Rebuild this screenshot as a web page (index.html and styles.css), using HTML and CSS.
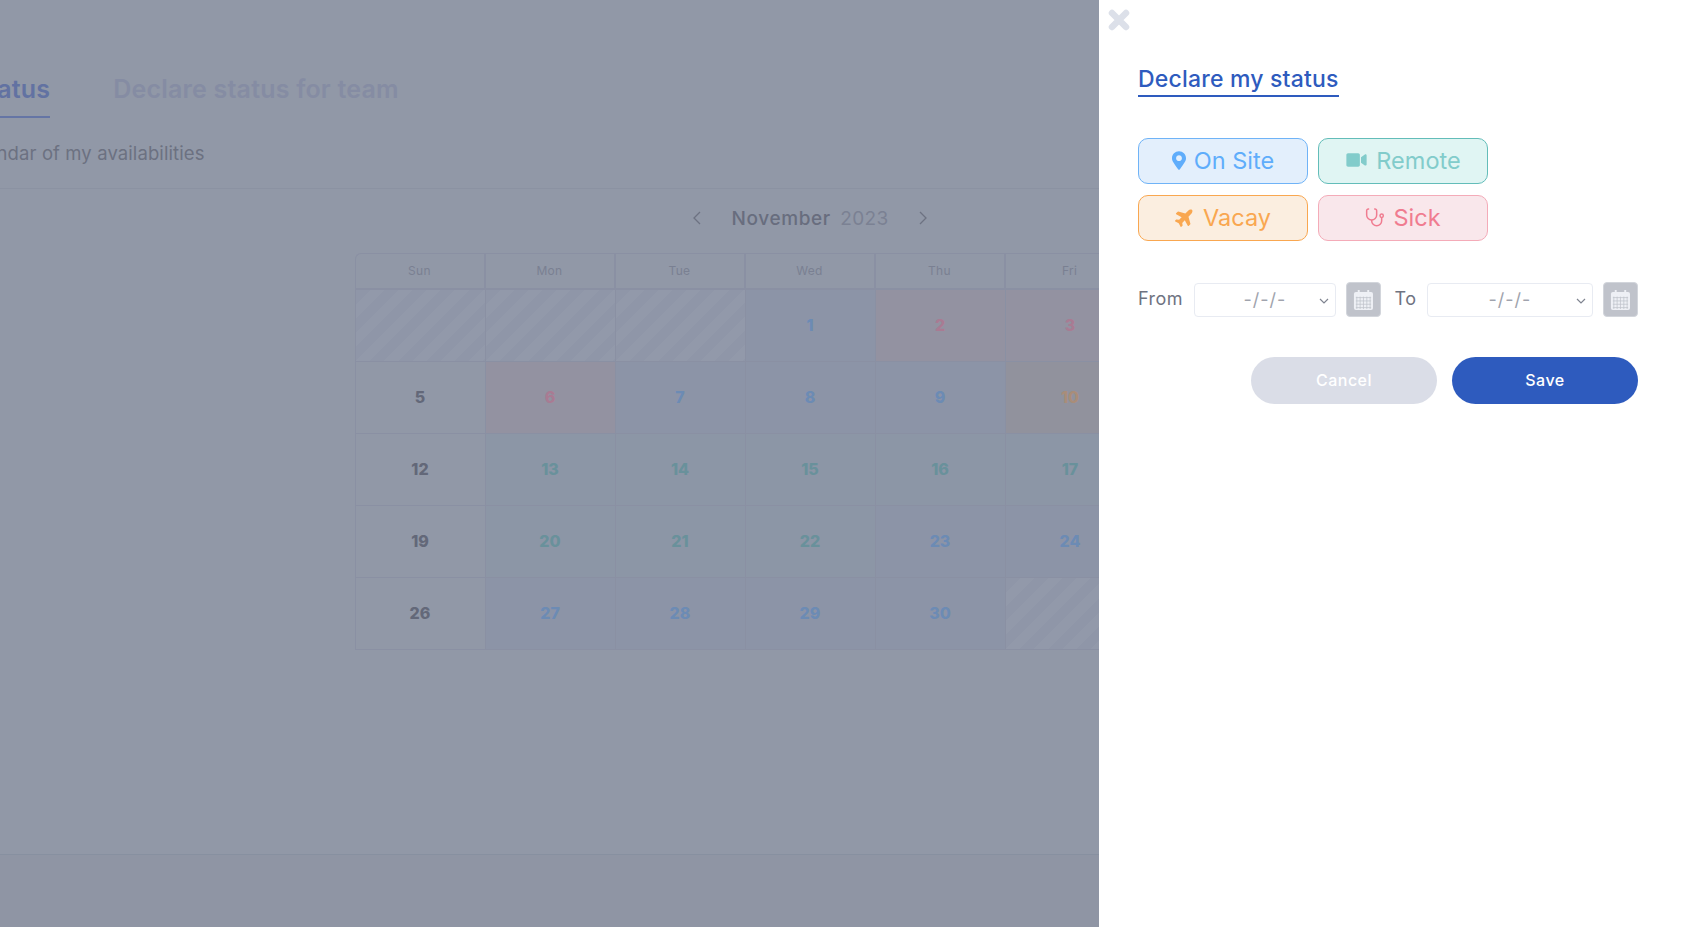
FILE: index.html
```html
<!DOCTYPE html>
<html lang="en">
<head>
    <meta charset="utf-8">
    <title>Declare my status</title>
    <link rel="stylesheet" href="styles.css">
</head>

<body>
    <div class="page">
        <div class="tabs">
            <a class="tab tab_active">Declare my status</a>
            <a class="tab">Declare status for team</a>
        </div>
        <p class="subtitle">Calendar of my availabilities</p>

        <div class="month">
            <svg class="chevron" viewBox="0 0 10 16"><path d="M8 2 2 8l6 6"/></svg>
            <div class="month_name"><b>November</b> <span>2023</span></div>
            <svg class="chevron" viewBox="0 0 10 16"><path d="m2 2 6 6-6 6"/></svg>
        </div>

        <div class="calendar">
            <div class="head">Sun</div>
            <div class="head">Mon</div>
            <div class="head">Tue</div>
            <div class="head">Wed</div>
            <div class="head">Thu</div>
            <div class="head">Fri</div>
            <div class="head">Sat</div>

            <div class="day off"></div>
            <div class="day off"></div>
            <div class="day off"></div>
            <div class="day site">1</div>
            <div class="day sick">2</div>
            <div class="day sick">3</div>
            <div class="day">4</div>

            <div class="day">5</div>
            <div class="day sick">6</div>
            <div class="day site">7</div>
            <div class="day site">8</div>
            <div class="day site">9</div>
            <div class="day vacay">10</div>
            <div class="day">11</div>

            <div class="day">12</div>
            <div class="day remote">13</div>
            <div class="day remote">14</div>
            <div class="day remote">15</div>
            <div class="day remote">16</div>
            <div class="day remote">17</div>
            <div class="day">18</div>

            <div class="day">19</div>
            <div class="day remote">20</div>
            <div class="day remote">21</div>
            <div class="day remote">22</div>
            <div class="day site">23</div>
            <div class="day site">24</div>
            <div class="day">25</div>

            <div class="day">26</div>
            <div class="day site">27</div>
            <div class="day site">28</div>
            <div class="day site">29</div>
            <div class="day site">30</div>
            <div class="day off"></div>
            <div class="day off"></div>
        </div>

        <div class="footer"></div>
    </div>

    <div class="drawer">
        <svg class="close" viewBox="0 0 22 22"><path d="M4 4l14 14M18 4 4 18"/></svg>

        <h2 class="title">Declare my status</h2>

        <div class="statuses">
            <button class="status status_site">
                <svg class="icon_site" viewBox="0 0 384 512"><path d="M172.268 501.67C26.97 291.031 0 268.413 0 192 0 85.961 85.961 0 192 0s192 85.961 192 192c0 76.413-26.97 99.031-172.268 309.67-9.535 13.774-29.93 13.773-39.464 0zM192 272c44.183 0 80-35.817 80-80s-35.817-80-80-80-80 35.817-80 80 35.817 80 80 80z"/></svg>
                On Site
            </button>
            <button class="status status_remote">
                <svg class="icon_remote" viewBox="0 0 576 512"><path d="M336.2 64H47.8C21.4 64 0 85.4 0 111.8v288.4C0 426.6 21.4 448 47.8 448h288.4c26.4 0 47.8-21.4 47.8-47.8V111.8c0-26.4-21.4-47.8-47.8-47.8zm189.4 37.7L416 177.3v157.4l109.6 75.5c21.2 14.6 50.4-.3 50.4-25.8V127.5c0-25.4-29.1-40.4-50.4-25.8z"/></svg>
                Remote
            </button>
            <button class="status status_vacay">
                <svg class="icon_vacay" viewBox="0 0 576 512"><path transform="rotate(-45 288 256)" d="M480 192H365.71L260.61 8.06A16.014 16.014 0 0 0 246.71 0h-65.5c-10.63 0-18.3 10.17-15.38 20.39L214.86 192H112l-43.2-57.6c-3.02-4.03-7.77-6.4-12.8-6.4H16.01C5.6 128-2.04 137.78.49 147.88L32 256 .49 364.12C-2.04 374.22 5.6 384 16.01 384H56c5.04 0 9.78-2.37 12.8-6.4L112 320h102.86l-49.03 171.6c-2.92 10.22 4.75 20.4 15.38 20.4h65.5c5.74 0 11.04-3.08 13.89-8.06L365.71 320H480c35.35 0 96-28.65 96-64s-60.65-64-96-64z"/></svg>
                Vacay
            </button>
            <button class="status status_sick">
                <svg class="icon_sick" viewBox="0 0 24 24"><path d="M5 2.500H4a2 2 0 0 0-2 2v5a6 6 0 0 0 12 0v-5a2 2 0 0 0-2-2h-1"/><path d="M8 15.500v1a6 6 0 0 0 12 0v-4"/><circle cx="20" cy="10.500" r="2"/></svg>
                Sick
            </button>
        </div>

        <div class="dates">
            <span class="date_label">From</span>
            <div class="select select_from">
                <span>-/-/-</span>
                <svg viewBox="0 0 10 6"><path d="m1 1 4 4 4-4"/></svg>
            </div>
            <button class="cal_btn">
                <svg viewBox="0 0 22 22"><path class="cal_body" d="M3 3h16a2 2 0 0 1 2 2v15a2 2 0 0 1-2 2H3a2 2 0 0 1-2-2V5a2 2 0 0 1 2-2z"/><path class="cal_ring" d="M6 1v4M16 1v4"/><path class="cal_grid" d="M3 9h16M3 12.500h16M3 16h16M3 19.500h16M4 8v13M7.500 8v13M11 8v13M14.500 8v13M18 8v13"/></svg>
            </button>
            <span class="date_label date_to">To</span>
            <div class="select select_to">
                <span>-/-/-</span>
                <svg viewBox="0 0 10 6"><path d="m1 1 4 4 4-4"/></svg>
            </div>
            <button class="cal_btn">
                <svg viewBox="0 0 22 22"><path class="cal_body" d="M3 3h16a2 2 0 0 1 2 2v15a2 2 0 0 1-2 2H3a2 2 0 0 1-2-2V5a2 2 0 0 1 2-2z"/><path class="cal_ring" d="M6 1v4M16 1v4"/><path class="cal_grid" d="M3 9h16M3 12.500h16M3 16h16M3 19.500h16M4 8v13M7.500 8v13M11 8v13M14.500 8v13M18 8v13"/></svg>
            </button>
        </div>

        <div class="actions">
            <button class="btn btn_cancel">Cancel</button>
            <button class="btn btn_save">Save</button>
        </div>
    </div>
</body>

</html>
```

FILE: styles.css
```css
* {
    box-sizing: border-box;
}

html, body {
    height: 100%;
}

body {
    margin: 0;
    overflow: hidden;
    font-family: Inter, "Open Sans", sans-serif;
    background-color: #9198a7;
}

.page {
    width: 2048px;
    height: 100%;
    margin-left: -214px;
    display: flex;
    flex-direction: column;
}

.tabs {
    display: flex;
    gap: 63px;
    padding-top: 71px;
    padding-left: 44px;
}

.tab {
    font-size: 25px;
    font-weight: 600;
    line-height: 36px;
    letter-spacing: 0.2px;
    padding-bottom: 9px;
    height: 47px;
    color: #858ca3;
    white-space: nowrap;
}

.tab_active {
    color: #6272a2;
    border-bottom: 2px solid #6575a5;
}

.subtitle {
    margin: 23px 0 0;
    padding: 0 0 23px 171px;
    font-size: 18.500px;
    line-height: 24px;
    letter-spacing: 0.1px;
    color: #6c7181;
    border-bottom: 1px solid #8b92a2;
}

.month {
    display: flex;
    justify-content: center;
    align-items: center;
    gap: 30px;
    height: 30px;
    margin-top: 14px;
}

.month_name {
    font-size: 19px;
    letter-spacing: 0.3px;
    color: #7b8193;
}

.month_name b {
    font-weight: 500;
    letter-spacing: 0.6px;
    color: #686d7e;
    margin-right: 4px;
}

.chevron {
    width: 10px;
    height: 16px;
    fill: none;
    stroke: #6d7282;
    stroke-width: 1.300;
}

.calendar {
    display: grid;
    grid-template-columns: repeat(7, 130px);
    grid-template-rows: 36px repeat(5, 72px);
    width: 911px;
    margin: 20px auto 0;
    border-top: 1px solid #8a90a3;
    border-left: 1px solid #8a90a3;
    border-radius: 6px 0 0 0;
}

.head, .day {
    display: flex;
    align-items: center;
    justify-content: center;
    padding-bottom: 2px;
    border-right: 1px solid #8a90a3;
    border-bottom: 1px solid #8a90a3;
}

.head {
    font-size: 12px;
    letter-spacing: 0.3px;
    color: #7a8092;
    border-bottom-width: 2px;
    border-right-width: 2px;
}

.day {
    font-size: 16px;
    font-weight: 800;
    color: #636879;
}

.off {
    background: repeating-linear-gradient(135deg, #8f96a8 0, #8f96a8 10px, #9299aa 10px, #9299aa 20px);
}

.site {
    background-color: #8c94a7;
    color: #6c8bb4;
}

.remote {
    background-color: #8c96a6;
    color: #69919b;
}

.sick {
    background-color: #9392a1;
    color: #a97b93;
}

.vacay {
    background-color: #91929d;
    color: #a98d79;
}

.footer {
    flex: 1;
    margin-top: 204px;
    background-color: #8f95a4;
    border-top: 1px solid #8790a0;
}

/* drawer */
.drawer {
    position: fixed;
    top: 0;
    right: 0;
    bottom: 0;
    width: 584px;
    padding: 63px 45px 0 39px;
    background-color: #fff;
}

.close {
    position: absolute;
    top: 9px;
    left: 9px;
    width: 22px;
    height: 22px;
    fill: none;
    stroke: #dce0e9;
    stroke-width: 6.500;
    stroke-linecap: round;
}

.title {
    display: inline-block;
    margin: 0;
    font-size: 23px;
    font-weight: 500;
    line-height: 32px;
    letter-spacing: 0.2px;
    color: #2e5bbe;
    border-bottom: 2px solid #2e5bbe;
}

.statuses {
    display: grid;
    grid-template-columns: 170px 170px;
    grid-auto-rows: 46px;
    column-gap: 10px;
    row-gap: 11px;
    margin-top: 41px;
}

.status {
    display: flex;
    align-items: center;
    justify-content: center;
    gap: 8px;
    padding: 0 0 2px;
    border: 1px solid;
    border-radius: 10px;
    font-family: inherit;
    font-size: 23.500px;
    cursor: pointer;
}

.status svg {
    fill: currentColor;
}

.status_site {
    color: #5fadfb;
    background-color: #e3effc;
    border-color: #6fb3f7;
}

.status_remote {
    color: #82cccb;
    background-color: #e0f5f3;
    border-color: #63bdb9;
}

.status_vacay {
    color: #f9a750;
    background-color: #fbeee0;
    border-color: #f9a750;
}

.status_sick {
    color: #f07c90;
    background-color: #f9e7eb;
    border-color: #f4abb8;
}

.icon_site {
    width: 14px;
    height: 19px;
}

.icon_remote {
    width: 23px;
    height: 18px;
}

.icon_vacay {
    width: 20px;
    height: 20px;
}

.status .icon_sick {
    width: 20px;
    height: 20px;
    fill: none;
    stroke: currentColor;
    stroke-width: 1.800;
}

.dates {
    display: flex;
    align-items: center;
    margin-top: 41px;
}

.date_label {
    font-size: 18px;
    letter-spacing: 0.5px;
    color: #6f7381;
    margin-right: 11px;
    padding-bottom: 2px;
}

.date_to {
    margin-left: 14px;
    margin-right: 10px;
}

.select {
    position: relative;
    height: 34px;
    display: flex;
    align-items: center;
    justify-content: center;
    border: 1px solid #e8ebf2;
    border-radius: 4px;
    font-size: 18px;
    letter-spacing: 1px;
    color: #a0a3ad;
}

.select_from {
    width: 142px;
}

.select_to {
    width: 167px;
}

.select svg {
    position: absolute;
    right: 6px;
    top: 14px;
    width: 10px;
    height: 6px;
    fill: none;
    stroke: #7f8490;
    stroke-width: 1.200;
}

.cal_btn {
    width: 35px;
    height: 35px;
    margin-left: 10px;
    padding: 6px;
    border: 1px solid #d2d5db;
    border-radius: 4px;
    background-color: #c0c3cb;
}

.cal_btn svg {
    display: block;
    width: 100%;
    height: 100%;
}

.cal_body {
    fill: #eef0f5;
}

.cal_ring {
    stroke: #eef0f5;
    stroke-width: 2;
}

.cal_grid {
    fill: none;
    stroke: #c0c3cb;
    stroke-width: 0.800;
}

.actions {
    display: flex;
    justify-content: flex-end;
    gap: 15px;
    margin-top: 40px;
}

.btn {
    width: 186px;
    height: 47px;
    padding: 0 0 2px;
    border: none;
    border-radius: 24px;
    font-family: inherit;
    font-size: 16px;
    font-weight: 500;
    letter-spacing: 0.5px;
    color: #fff;
    cursor: pointer;
}

.btn_cancel {
    background-color: #dadde7;
}

.btn_save {
    background-color: #2e5bbe;
}
```
